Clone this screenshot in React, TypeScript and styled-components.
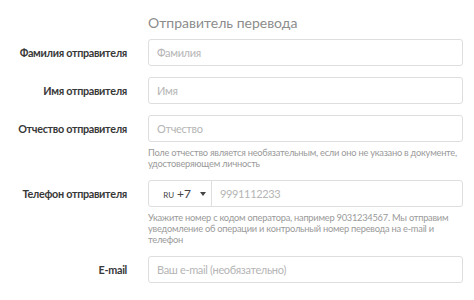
import styled, { createGlobalStyle } from "styled-components";

const GlobalStyle = createGlobalStyle`
  body {
    margin: 0;
    background: #ffffff;
    font-family: Lato, Roboto, sans-serif;
  }
`;

const Page = styled.main`
  padding-top: 14px;
  width: 474px;
`;

const Form = styled.div`
  display: grid;
  grid-template-columns: 127px 315px;
  column-gap: 21px;
  row-gap: 11px;
  align-items: start;
`;

const Heading = styled.h3`
  grid-column: 2;
  margin: 0 0 -3px;
  font-size: 14px;
  line-height: 17px;
  font-weight: 400;
  color: #8c8c8c;
`;

const Label = styled.label`
  grid-column: 1;
  text-align: right;
  font-size: 10.8px;
  letter-spacing: -0.3px;
  font-weight: 700;
  line-height: 27px;
  color: #383838;
  white-space: nowrap;
`;

const Field = styled.div`
  grid-column: 2;
  display: flex;
  flex-direction: column;
`;

const Box = styled.div`
  display: flex;
  height: 27px;
  box-sizing: border-box;
  border: 1px solid #dedede;
  border-radius: 3px;
  background: #fff;
`;

const Input = styled.input`
  flex: 1;
  min-width: 0;
  border: none;
  background: transparent;
  padding: 0 8px;
  font-family: inherit;
  font-size: 11px;
  letter-spacing: -0.35px;
  color: #333;
  outline: none;
  &::placeholder {
    color: #b5b5b5;
  }
`;

const Country = styled.div`
  width: 63px;
  display: flex;
  align-items: center;
  justify-content: flex-end;
  gap: 3px;
  padding-right: 5px;
  box-sizing: border-box;
  border-right: 1px solid #dedede;
  color: #444;
  font-size: 12px;
  small {
    font-size: 8px;
    margin-top: 2px;
  }
`;

const Caret = styled.span`
  width: 0;
  height: 0;
  margin-left: 6px;
  border-left: 3.5px solid transparent;
  border-right: 3.5px solid transparent;
  border-top: 4px solid #444;
`;

const Hint = styled.p`
  margin: 5px 0 0;
  font-size: 9.3px;
  letter-spacing: -0.25px;
  line-height: 11px;
  color: #9a9a9a;
  white-space: nowrap;
`;

export default function App() {
  return (
    <Page>
      <GlobalStyle />
      <Form>
        <Heading>Отправитель перевода</Heading>

        <Label>Фамилия отправителя</Label>
        <Field>
          <Box>
            <Input placeholder="Фамилия" />
          </Box>
        </Field>

        <Label>Имя отправителя</Label>
        <Field>
          <Box>
            <Input placeholder="Имя" />
          </Box>
        </Field>

        <Label>Отчество отправителя</Label>
        <Field>
          <Box>
            <Input placeholder="Отчество" />
          </Box>
          <Hint>
            Поле отчество является необязательным, если оно не указано в документе,
            <br />
            удостоверяющем личность
          </Hint>
        </Field>

        <Label>Телефон отправителя</Label>
        <Field>
          <Box>
            <Country>
              <small>RU</small>
              <span>+7</span>
              <Caret />
            </Country>
            <Input placeholder="9991112233" />
          </Box>
          <Hint>
            Укажите номер с кодом оператора, например 9031234567. Мы отправим
            <br />
            уведомление об операции и контрольный номер перевода на e-mail и
            <br />
            телефон
          </Hint>
        </Field>

        <Label>E-mail</Label>
        <Field>
          <Box>
            <Input placeholder="Ваш e-mail (необязательно)" />
          </Box>
        </Field>
      </Form>
    </Page>
  );
}
